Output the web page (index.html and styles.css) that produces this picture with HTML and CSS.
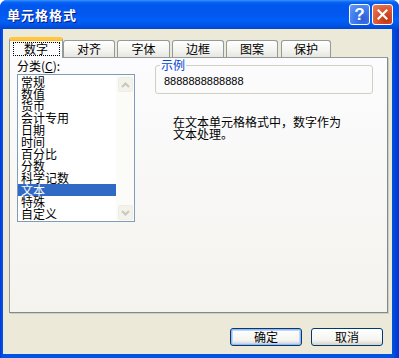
FILE: index.html
```html
<!DOCTYPE html>
<html lang="zh">
<head>
<meta charset="utf-8">
<title>单元格格式</title>
<link rel="stylesheet" href="styles.css">
</head>
<body>
<div class="window">
  <div class="titlebar">
    <span class="title">单元格格式</span>
    <div class="tbtns">
      <span class="tbtn help">?</span>
      <span class="tbtn close"><svg width="11" height="11" viewBox="0 0 11 11"><path d="M1.5 1.5 L9.5 9.5 M9.5 1.5 L1.5 9.5" stroke="#fff" stroke-width="2.2" stroke-linecap="square"/></svg></span>
    </div>
  </div>
  <div class="client">
    <div class="tabs">
      <div class="tab sel"><span class="focus">数字</span></div>
      <div class="tab t2">对齐</div>
      <div class="tab t3">字体</div>
      <div class="tab t4">边框</div>
      <div class="tab t5">图案</div>
      <div class="tab t6">保护</div>
    </div>
    <div class="panel">
      <div class="left">
        <div class="label">分类(<u>C</u>):</div>
        <div class="listbox">
          <ul class="items">
            <li>常规</li>
            <li>数值</li>
            <li>货币</li>
            <li>会计专用</li>
            <li>日期</li>
            <li>时间</li>
            <li>百分比</li>
            <li>分数</li>
            <li>科学记数</li>
            <li class="selected">文本</li>
            <li>特殊</li>
            <li>自定义</li>
          </ul>
          <div class="scrollbar">
            <div class="sbtn"><svg width="9" height="6" viewBox="0 0 9 6"><path d="M1 5 L4.5 1.5 L8 5" fill="none" stroke="#C9C7BA" stroke-width="2"/></svg></div>
            <div class="track"></div>
            <div class="sbtn"><svg width="9" height="6" viewBox="0 0 9 6"><path d="M1 1 L4.5 4.5 L8 1" fill="none" stroke="#C9C7BA" stroke-width="2"/></svg></div>
          </div>
        </div>
      </div>
      <div class="right">
        <fieldset class="sample">
          <legend>示例</legend>
          <div class="sample-value">8888888888888</div>
        </fieldset>
        <p class="desc">在文本单元格格式中，数字作为<br>文本处理。</p>
      </div>
    </div>
    <div class="buttons">
      <button class="btn ok">确定</button>
      <button class="btn">取消</button>
    </div>
  </div>
</div>
</body>
</html>
```
FILE: styles.css
```css
* { box-sizing: border-box; }
body {
  margin: 0;
  width: 399px;
  height: 358px;
  overflow: hidden;
  font-family: "Noto Sans CJK SC", "Noto Sans CJK JP", sans-serif;
  font-size: 12px;
  color: #000;
  background: #fff;
}
.window {
  width: 399px;
  height: 358px;
  display: flex;
  flex-direction: column;
  background: linear-gradient(90deg, #0831D9 0, #0054E3 2px, #0054E3 392px, #0046D5 395px, #0831D9 399px);
  border-radius: 7px 7px 0 0;
  overflow: hidden;
}
.titlebar {
  height: 29px;
  flex: none;
  display: flex;
  align-items: center;
  justify-content: space-between;
  padding: 0 6px 0 7px;
  background: linear-gradient(#3D95FF 0, #0A66F5 2px, #0058EE 5px, #0257EE 14px, #0060F8 20px, #0055E8 25px, #0045D0 29px);
}
.title {
  color: #fff;
  font-weight: bold;
  font-size: 13px;
  letter-spacing: 1px;
  text-shadow: 1px 1px 0 #0A1883;
  line-height: 16px;
}
.tbtns { display: flex; gap: 2px; }
.tbtn {
  width: 21px;
  height: 21px;
  border: 1px solid #fff;
  border-radius: 3px;
  display: flex;
  align-items: center;
  justify-content: center;
}
.help {
  background: radial-gradient(circle at 70% 75%, #2C5FD8 0, #3F7CEC 50%, #6B9BF3 100%);
  color: #fff;
  font-family: "Liberation Sans", sans-serif;
  font-weight: bold;
  font-size: 17px;
  line-height: 19px;
}
.close {
  background: radial-gradient(circle at 70% 75%, #C2350F 0, #DC5632 50%, #E9825F 100%);
}
.client {
  flex: 1;
  margin: 0 7px 4px 3px;
  background: #ECE9D8;
  padding: 8px 4px 0 6px;
  display: flex;
  flex-direction: column;
}
.tabs {
  display: flex;
  align-items: flex-end;
  height: 21px;
  margin-bottom: -1px;
  position: relative;
  z-index: 1;
}
.tab {
  height: 17px;
  margin-bottom: 1px;
  border: 1px solid #919B9C;
  border-bottom: none;
  border-radius: 3px 3px 0 0;
  background: linear-gradient(#FFFFFF, #F3F3EF 60%, #E7E6E0);
  display: flex;
  align-items: center;
  justify-content: center;
  line-height: 14px;
}
.tab.sel {
  width: 54px;
  height: 21px;
  margin-bottom: 0;
  background: #FCFCFE;
  border-top: 3px solid #FFC83C;
  box-shadow: inset 0 1px 0 #F9B23A;
  padding-top: 0;
}
.focus {
  display: block;
  width: 47px;
  height: 14px;
  border: 1px dotted #000;
  text-align: center;
  line-height: 12px;
}
.t2 { width: 52px; }
.t3 { width: 53px; margin-left: 2px; }
.t4 { width: 52px; margin-left: 2px; }
.t5 { width: 52px; margin-left: 2px; }
.t6 { width: 50px; margin-left: 3px; }
.panel {
  height: 256px;
  flex: none;
  border: 1px solid #919B9C;
  border-right-color: #7E8A8B;
  border-bottom-color: #7E8A8B;
  box-shadow: 1px 1px 0 #D0CEBF;
  background: linear-gradient(#FCFCFE, #F4F3EE);
  padding: 0 0 0 7px;
  display: flex;
  gap: 20px;
}
.left { width: 118px; }
.label { height: 16px; line-height: 16px; }
.listbox {
  height: 148px;
  border: 1px solid #7F9DB9;
  background: #fff;
  display: flex;
}
.items {
  list-style: none;
  margin: 0;
  padding: 1px 0 0 0;
  width: 98px;
}
.items li {
  height: 12px;
  line-height: 12px;
  padding-left: 3px;
  white-space: nowrap;
}
.items li.selected { background: #316AC5; color: #fff; }
.scrollbar {
  width: 18px;
  display: flex;
  flex-direction: column;
  background: #FBFBF8;
  padding: 2px 1px 1px 1px;
}
.sbtn {
  height: 15px;
  width: 15px;
  margin-left: 1px;
  border: 1px solid #EFEEE6;
  border-radius: 2px;
  background: #F3F2EB;
  display: flex;
  align-items: center;
  justify-content: center;
}
.track { flex: 1; }
.right { width: 218px; padding-top: 1px; }
.sample {
  margin: 0;
  padding: 3px 8px 5px 8px;
  border: 1px solid #D0D0BF;
  border-radius: 3px;
}
.sample legend {
  padding: 0 1px;
  margin-left: -4px;
  line-height: 12px;
  color: #0046D5;
}
.sample-value {
  font-family: "Liberation Sans", sans-serif;
  font-size: 11px;
  line-height: 14px;
}
.desc {
  margin: 22px 0 0 18px;
  line-height: 12px;
}
.buttons {
  display: flex;
  justify-content: flex-end;
  gap: 9px;
  margin-top: 15px;
  padding-right: 5px;
}
.btn {
  width: 72px;
  height: 18px;
  padding: 0;
  border: 1px solid #003C74;
  border-radius: 3px;
  background: linear-gradient(#FFFFFF, #F4F4F0 70%, #D6D0C5);
  font-family: "Noto Sans CJK SC", "Noto Sans CJK JP", sans-serif;
  font-size: 12px;
  line-height: 14px;
  color: #000;
}
.btn.ok {
  box-shadow: inset 0 0 0 1px #98B8EA, inset 0 0 0 2px #C3D5FD;
}
```
